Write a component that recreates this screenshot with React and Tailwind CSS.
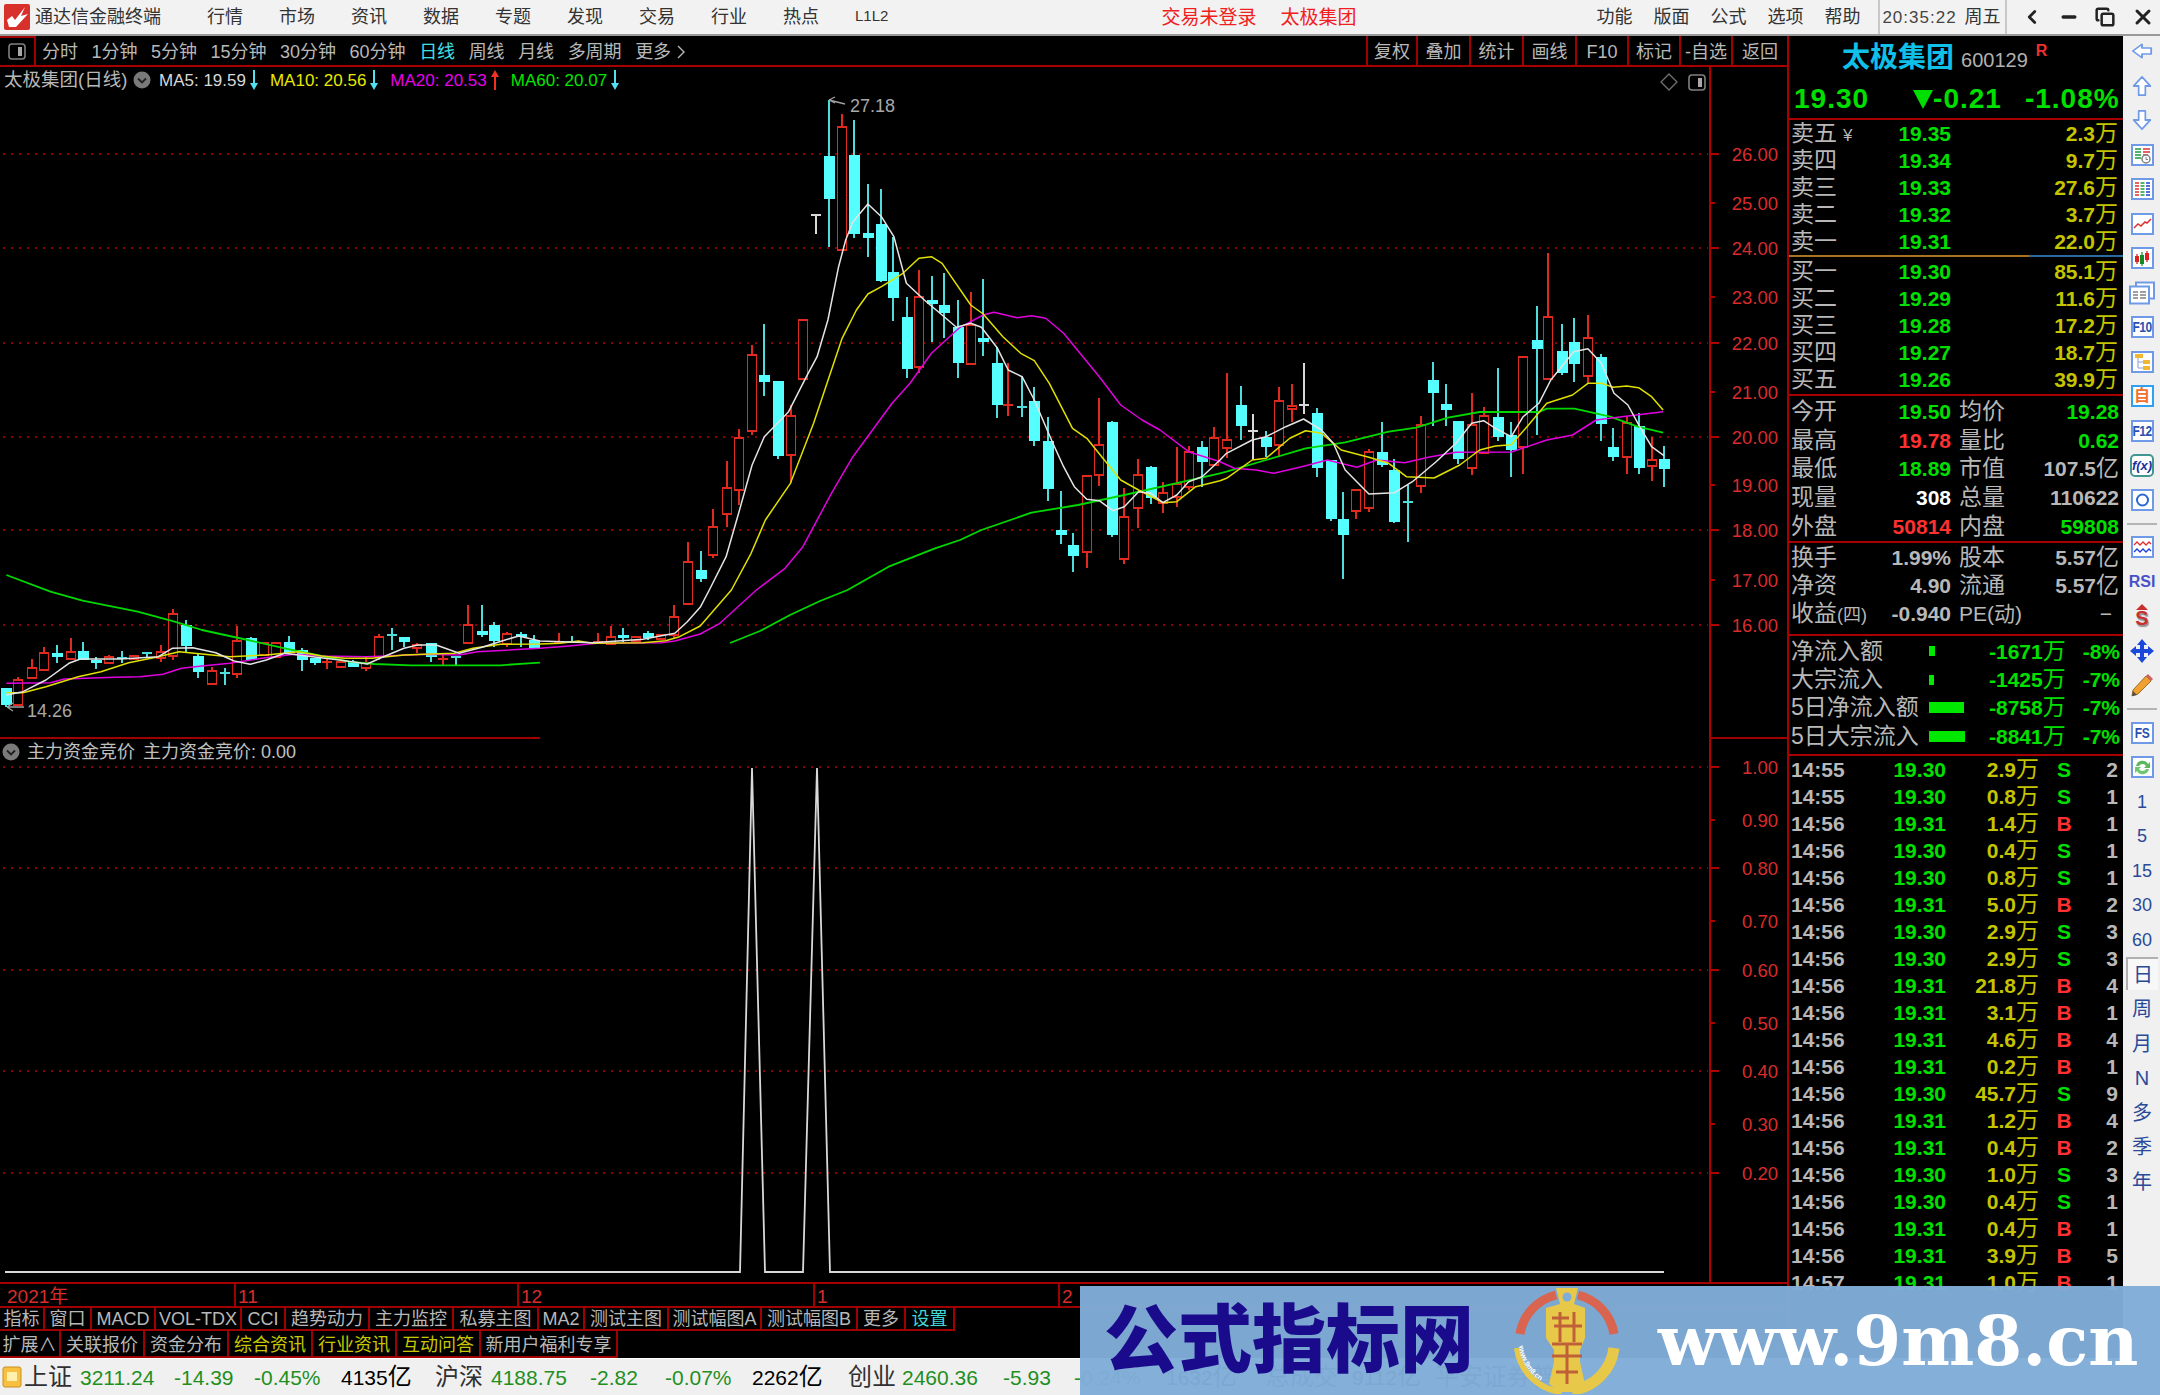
// App.jsx - 通达信 terminal screen
import { ChevronLeft, Minus, Copy, X } from "lucide-react";

// chart data below was read off crops of the chart, so every block keeps its own origin and x scale
const near = (o) => ([x, ...ys]) => [o.ox + x / o.sx, ...ys.map((y) => o.oy + y / 3)];
const A = near({ ox: 0, sx: 2.178, oy: 560 });
const B = near({ ox: 660, sx: 2.8, oy: 90 });
const C = near({ ox: 1100, sx: 2.529, oy: 240 });

// [x, high, top, bottom, low, kind]
const mk = (f, rows) => rows.map((r) => [...f(r.slice(0, 5)), r[5]]);
const candles = [
  ...mk(A, [
    [14, 385, 385, 435, 440, "c"], [40, 350, 360, 435, 435, "r"], [70, 297, 325, 353, 353, "r"], [96, 260, 280, 330, 330, "r"],
    [125, 255, 278, 291, 310, "c"], [154, 233, 275, 297, 297, "r"], [181, 245, 273, 300, 300, "c"], [210, 290, 300, 310, 328, "c"],
    [237, 285, 292, 308, 308, "r"], [265, 273, 293, 300, 310, "c"], [292, 285, 288, 298, 298, "r"], [320, 279, 279, 287, 290, "c"],
    [350, 255, 275, 295, 305, "r"], [377, 148, 162, 287, 300, "r"], [405, 180, 195, 258, 275, "c"], [432, 280, 288, 337, 355, "c"],
    [461, 322, 333, 372, 372, "r"], [489, 325, 338, 340, 376, "c"], [517, 197, 243, 343, 355, "r"], [547, 232, 235, 300, 300, "c"],
    [575, 250, 250, 285, 285, "r"], [602, 245, 248, 290, 295, "r"], [629, 228, 247, 278, 280, "c"], [657, 265, 270, 300, 332, "c"],
    [685, 295, 295, 310, 315, "c"], [712, 295, 307, 313, 328, "r"], [742, 300, 305, 322, 322, "r"], [769, 300, 305, 322, 322, "c"],
    [798, 290, 310, 323, 332, "r"], [825, 222, 230, 290, 300, "r"], [854, 205, 224, 227, 270, "c"], [880, 230, 230, 247, 260, "c"],
    [908, 250, 255, 265, 278, "r"], [938, 248, 248, 292, 305, "c"], [964, 280, 297, 299, 315, "r"], [993, 290, 292, 294, 315, "c"],
    [1020, 135, 195, 249, 249, "r"], [1050, 135, 212, 224, 232, "c"], [1076, 185, 195, 243, 260, "c"], [1105, 215, 222, 253, 262, "r"],
    [1134, 215, 222, 232, 260, "c"], [1162, 225, 240, 265, 265, "c"], [1217, 220, 245, 248, 250, "r"], [1246, 228, 246, 248, 250, "c"],
    [1302, 220, 247, 249, 250, "r"], [1330, 198, 230, 252, 252, "r"], [1357, 203, 224, 233, 245, "c"], [1386, 228, 230, 243, 248, "r"],
    [1412, 212, 220, 233, 240, "c"], [1440, 225, 225, 236, 240, "r"], [1468, 135, 172, 225, 235, "r"],
  ]),
  ...mk(B, [
    [77, 1355, 1415, 1542, 1542, "r"], [115, 1382, 1441, 1468, 1476, "c"], [148, 1258, 1312, 1394, 1404, "r"], [187, 1112, 1194, 1272, 1310, "r"],
    [220, 1018, 1045, 1200, 1246, "r"], [258, 766, 794, 1024, 1036, "r"], [292, 702, 855, 875, 918, "c"], [330, 873, 873, 1098, 1108, "c"],
    [368, 946, 978, 1096, 1180, "r"], [400, 690, 690, 866, 866, "r"], [437, 375, 376, 378, 432, "w"], [472, 30, 198, 328, 472, "c"],
    [510, 72, 110, 480, 480, "r"], [544, 90, 194, 432, 445, "c"], [582, 283, 428, 445, 500, "c"], [620, 297, 402, 572, 577, "c"],
    [653, 440, 545, 625, 693, "c"], [691, 622, 680, 836, 863, "c"], [724, 540, 622, 830, 850, "r"], [762, 558, 631, 643, 757, "c"],
    [796, 549, 644, 670, 743, "c"], [834, 631, 712, 818, 863, "c"], [872, 607, 705, 823, 823, "r"], [905, 568, 743, 755, 797, "c"],
    [943, 770, 820, 945, 985, "c"], [975, 820, 946, 949, 977, "r"], [1014, 858, 950, 958, 981, "c"], [1048, 892, 932, 1052, 1068, "c"],
    [1086, 982, 1054, 1197, 1233, "c"], [1124, 1202, 1320, 1336, 1363, "c"], [1157, 1328, 1365, 1398, 1445, "c"], [1195, 1158, 1158, 1385, 1435, "r"],
    [1228, 923, 1064, 1155, 1188, "r"], [1266, 992, 996, 1336, 1340, "c"], [1299, 1193, 1280, 1407, 1422, "r"], [1337, 1108, 1155, 1253, 1313, "r"],
    [1375, 1127, 1130, 1225, 1242, "c"], [1408, 1175, 1208, 1240, 1268, "r"], [1447, 1072, 1182, 1222, 1250, "r"], [1480, 1068, 1086, 1190, 1200, "r"],
    [1518, 1053, 1072, 1115, 1190, "c"], [1552, 1010, 1045, 1125, 1125, "r"],
  ]),
  ...mk(C, [
    [322, 400, 601, 625, 655, "r"], [356, 437, 496, 557, 600, "c"], [386, 522, 574, 576, 660, "w"], [421, 573, 590, 621, 650, "c"],
    [452, 441, 484, 615, 650, "r"], [486, 432, 497, 507, 545, "r"], [516, 370, 496, 498, 522, "w"], [550, 505, 518, 684, 710, "c"],
    [584, 660, 660, 837, 842, "c"], [614, 757, 838, 886, 1017, "c"], [648, 750, 750, 812, 836, "r"], [680, 628, 637, 805, 815, "r"],
    [714, 545, 636, 676, 680, "c"], [744, 658, 689, 847, 850, "c"], [778, 735, 785, 787, 905, "c"], [812, 527, 555, 737, 760, "r"],
    [842, 365, 419, 459, 558, "c"], [876, 433, 491, 509, 558, "c"], [906, 542, 544, 657, 672, "c"], [940, 460, 555, 683, 706, "r"],
    [972, 500, 528, 638, 642, "r"], [1006, 383, 532, 590, 603, "c"], [1040, 545, 586, 630, 710, "c"], [1070, 352, 352, 622, 702, "r"],
    [1104, 198, 301, 328, 585, "c"], [1134, 40, 231, 417, 417, "r"], [1168, 252, 334, 400, 405, "c"], [1198, 235, 307, 373, 427, "c"],
    [1234, 225, 294, 408, 428, "r"], [1268, 343, 352, 553, 603, "c"], [1298, 563, 622, 652, 662, "c"], [1332, 530, 550, 652, 702, "r"],
    [1362, 518, 558, 684, 702, "c"], [1396, 590, 659, 678, 724, "r"], [1426, 618, 658, 688, 742, "c"],
  ]),
];

const pts = (f, rows) => rows.map(f);
const path = (...parts) => parts.flat().map((p) => p[0].toFixed(1) + "," + p[1].toFixed(1)).join(" ");

const ma5 = path(
  pts(A, [[14,405],[50,395],[100,360],[150,310],[175,297],[260,297],[290,295],[345,290],[375,265],[420,263],[470,278],[510,303],[545,313],[580,300],[620,280],[680,290],[740,300],[800,312],[830,293],[880,265],[910,255],[950,255],[1000,280],[1050,262],[1100,240],[1130,228],[1176,243],[1290,248],[1400,238],[1470,220],[1497,185],[1526,140]]),
  pts(B, [[138,1500],[185,1400],[220,1270],[258,1125],[292,1040],[360,965],[410,860],[440,800],[470,690],[500,530],[520,450],[540,395],[582,342],[620,380],[655,440],[690,580],[740,630],[790,675],[830,712],[870,700],[900,712],[945,775],[975,840],[1014,860],[1048,930],[1100,1060],[1130,1130],[1160,1190],[1195,1228],[1230,1232],[1268,1262],[1300,1250],[1340,1205],[1375,1210],[1408,1238],[1447,1215],[1480,1175],[1518,1160],[1568,1110]]),
  pts(C, [[320,640],[385,600],[420,590],[470,560],[515,537],[560,570],[590,610],[620,690],[680,762],[745,758],[790,725],[850,665],[900,610],[940,550],[970,542],[1000,565],[1040,590],[1070,530],[1110,490],[1140,420],[1198,335],[1234,326],[1268,370],[1300,460],[1335,495],[1365,560],[1395,620],[1426,647]])
);
const ma10 = path(
  pts(A, [[14,398],[50,398],[100,380],[170,350],[220,335],[280,308],[340,292],[390,275],[440,282],[500,290],[580,285],[650,275],[700,288],[750,295],[810,295],[880,285],[940,282],[990,280],[1030,265],[1090,253],[1176,252],[1220,250],[1260,243],[1290,250],[1400,248],[1450,242],[1480,230],[1525,198],[1568,130]]),
  pts(B, [[200,1500],[255,1390],[295,1290],[365,1180],[430,1000],[510,745],[550,660],[582,612],[620,590],[680,550],[725,505],[760,500],[790,520],[870,645],[905,672],[960,740],[1010,790],[1048,812],[1090,880],[1155,1015],[1195,1045],[1240,1105],[1290,1170],[1340,1200],[1408,1238],[1447,1235],[1500,1190],[1568,1172]]),
  pts(C, [[320,715],[385,660],[420,655],[480,595],[520,572],[560,580],[610,630],[680,652],[730,670],[775,710],[845,714],[910,675],[960,630],[1000,618],[1040,614],[1080,560],[1130,490],[1195,465],[1234,430],[1268,430],[1298,442],[1332,438],[1362,443],[1395,470],[1424,510]])
);
const ma20 = path(
  pts(A, [[14,370],[110,368],[140,357],[250,352],[305,350],[355,343],[395,325],[440,318],[500,310],[570,295],[640,283],[700,288],[800,290],[930,283],[1000,285],[1040,275],[1176,265],[1240,258],[1300,250],[1440,248],[1470,243],[1525,222],[1568,190]]),
  pts(B, [[270,1500],[350,1435],[400,1370],[480,1210],[540,1100],[650,940],[700,880],[760,790],[840,712],[905,675],[935,667],[1000,683],[1040,677],[1080,685],[1130,730],[1230,860],[1290,945],[1350,990],[1400,1020],[1480,1085],[1568,1115]]),
  pts(C, [[340,685],[395,690],[440,700],[510,680],[575,660],[650,682],[700,660],[770,668],[830,652],[900,637],[1040,636],[1130,600],[1195,585],[1255,540],[1320,530],[1424,515]])
);
const ma60a = path(pts(A, [[14,45],[110,95],[180,122],[300,155],[380,185],[440,210],[540,240],[620,265],[700,288],[760,305],[815,312],[895,316],[1090,316],[1150,310],[1176,308]]));
const ma60b = path(
  [[730,643],[760,631],[790,615],[820,601]],
  pts(B, [[525,1500],[640,1430],[770,1375],[840,1350],[900,1320],[1040,1268],[1170,1245],[1300,1215],[1568,1150]]),
  pts(C, [[320,695],[420,660],[520,625],[620,607],[730,575],[800,563],[880,533],[960,516],[1110,516],[1130,506],[1200,506],[1290,530],[1360,560],[1424,578]])
);

const upperAxis = [[26,154],[25,203],[24,248],[23,297],[22,343],[21,392],[20,437],[19,485],[18,530],[17,580],[16,625]];
const lowerAxis = [["1.00",767],["0.90",820],["0.80",868],["0.70",921],["0.60",970],["0.50",1023],["0.40",1071],["0.30",1124],["0.20",1173]];

function ChartSvg() {
  return (
    <svg width="1787" height="1215" viewBox="0 67 1787 1215" className="block">
      {[154, 248, 343, 437, 530, 625, 767, 868, 970, 1071, 1173].map((y) => (
        <line key={y} x1="3" x2="1708" y1={y} y2={y} stroke="#8c0000" strokeWidth="2" strokeDasharray="2 6" />
      ))}

      {/* axis */}
      <line x1="1710" x2="1710" y1="67" y2="1282" stroke="#b00000" strokeWidth="2" />
      <line x1="0" x2="540" y1="738" y2="738" stroke="#a00000" strokeWidth="2" />
      <line x1="1710" x2="1787" y1="738" y2="738" stroke="#a00000" strokeWidth="2" />
      {upperAxis.map(([v, y]) => (
        <g key={v}>
          <line x1="1710" x2={v % 2 === 0 ? 1719 : 1715} y1={y} y2={y} stroke="#b00000" strokeWidth="2" />
          <text x="1778" y={y + 7} textAnchor="end" fontSize="18.5" fill="#d82c2c">{v}.00</text>
        </g>
      ))}
      {lowerAxis.map(([v, y], i) => (
        <g key={v}>
          <line x1="1710" x2={i % 2 === 0 ? 1719 : 1715} y1={y} y2={y} stroke="#b00000" strokeWidth="2" />
          <text x="1778" y={y + 7} textAnchor="end" fontSize="18.5" fill="#d82c2c">{v}</text>
        </g>
      ))}

      {/* candles */}
      {candles.map(([x, hi, top, bot, lo, k], i) => {
        const cx = Math.round(x);
        const color = k === "r" ? "#e0291f" : k === "c" ? "#4fdcdc" : "#d8d8d8";
        const doji = bot - top < 3;
        return (
          <g key={i} shapeRendering="crispEdges">
            <line x1={cx} x2={cx} y1={hi} y2={lo} stroke={color} strokeWidth="1.6" />
            {doji ? (
              <line x1={cx - 5} x2={cx + 5} y1={top} y2={top} stroke={color} strokeWidth="2" />
            ) : k === "r" ? (
              <rect x={cx - 4.5} y={top} width="9" height={bot - top} fill="#000" stroke="#e0291f" strokeWidth="1.8" />
            ) : (
              <rect x={cx - 5} y={top} width="10.5" height={bot - top} fill="#55ffff" />
            )}
          </g>
        );
      })}

      <polyline points={ma60a} fill="none" stroke="#00d800" strokeWidth="1.8" strokeLinejoin="round" />
      <polyline points={ma60b} fill="none" stroke="#00d800" strokeWidth="1.8" strokeLinejoin="round" />
      <polyline points={ma20} fill="none" stroke="#e000e0" strokeWidth="1.5" strokeLinejoin="round" />
      <polyline points={ma10} fill="none" stroke="#e0e000" strokeWidth="1.5" strokeLinejoin="round" />
      <polyline points={ma5} fill="none" stroke="#e4e4e4" strokeWidth="1.5" strokeLinejoin="round" />

      {/* high / low marks */}
      <path d="M829 100 L845 104 M829 100 L835 97 M829 100 L835 103" stroke="#a0a0a0" strokeWidth="1.3" fill="none" />
      <text x="850" y="112" fontSize="18" fill="#a8a8a8">27.18</text>
      <path d="M7 707 L24 707 M7 707 L13 703 M7 707 L13 711" stroke="#a0a0a0" strokeWidth="1.3" fill="none" />
      <text x="27" y="717" fontSize="18" fill="#a8a8a8">14.26</text>

      {/* lower indicator */}
      <polyline
        points="5,1272 740,1272 752,768 765,1272 803,1272 817,768 830,1272 1664,1272"
        fill="none"
        stroke="#d8d8d8"
        strokeWidth="1.8"
      />
    </svg>
  );
}

const ChevronDot = () => (
  <svg width="18" height="18" viewBox="0 0 18 18" className="shrink-0">
    <circle cx="9" cy="9" r="8.5" fill="#7a7a7a" />
    <path d="M5 7.5 L9 11.5 L13 7.5" fill="none" stroke="#202020" strokeWidth="1.8" />
  </svg>
);

const Drop = ({ up, color }) => (
  <svg width="10" height="22" viewBox="0 0 10 22" className="shrink-0 ml-[3px]">
    {up ? (
      <path d="M5 1 L9 8 H6 V21 H4 V8 H1 Z" fill={color} />
    ) : (
      <path d="M5 21 L9 14 H6 V1 H4 V14 H1 Z" fill={color} />
    )}
  </svg>
);

const PanelToggle = ({ className }) => (
  <svg width="18" height="17" viewBox="0 0 18 17" className={className}>
    <rect x="1" y="1" width="16" height="15" rx="3" fill="none" stroke="#808080" strokeWidth="1.6" />
    <rect x="10" y="4" width="4" height="9" fill="#a8a8a8" />
  </svg>
);

const periods = ["分时", "1分钟", "5分钟", "15分钟", "30分钟", "60分钟", "日线", "周线", "月线", "多周期"];
const toolRight = [
  { t: "复权", w: "w-[50px]" }, { t: "叠加", w: "w-[53px]" }, { t: "统计", w: "w-[53px]" }, { t: "画线", w: "w-[53px]" },
  { t: "F10", w: "w-[52px]" }, { t: "标记", w: "w-[52px]" }, { t: "-自选", w: "w-[52px]" }, { t: "返回", w: "w-[56px]" },
];
const tabsA = [
  { t: "指标", w: "w-[45px]" }, { t: "窗口", w: "w-[47px]" }, { t: "MACD", w: "w-[64px]" }, { t: "VOL-TDX", w: "w-[86px]" },
  { t: "CCI", w: "w-[44px]" }, { t: "趋势动力", w: "w-[84px]" }, { t: "主力监控", w: "w-[84px]" }, { t: "私募主图", w: "w-[85px]" },
  { t: "MA2", w: "w-[46px]" }, { t: "测试主图", w: "w-[84px]" }, { t: "测试幅图A", w: "w-[93px]" }, { t: "测试幅图B", w: "w-[96px]" },
  { t: "更多", w: "w-[48px]" }, { t: "设置", w: "w-[49px]", c: "text-[#40d8d8]" },
];
const tabsB = [
  { t: "扩展∧", w: "w-[61px]" }, { t: "关联报价", w: "w-[84px]" }, { t: "资金分布", w: "w-[84px]" },
  { t: "综合资讯", w: "w-[84px]", c: "text-[#c8c800]" }, { t: "行业资讯", w: "w-[84px]", c: "text-[#c8c800]" },
  { t: "互动问答", w: "w-[84px]", c: "text-[#c8c800]" }, { t: "新用户福利专享", w: "w-[137px]" },
];

function LeftColumn() {
  return (
    <div className="w-[1787px] shrink-0 flex flex-col">
      {/* period bar */}
      <div className="h-[31px] flex items-stretch border-b-2 border-[#a80000] text-[18px] text-[#b8b8b8] shrink-0">
        <div className="w-[36px] flex items-center justify-center border-t-2 border-r-2 border-[#a00000]">
          <PanelToggle />
        </div>
        <div className="flex items-center pl-[6px] pt-[3px] gap-[13.5px]">
          {periods.map((p) => (
            <span key={p} className={p === "日线" ? "text-[#40e0e8]" : ""}>{p}</span>
          ))}
          <span className="flex items-center gap-[5px]">
            更多
            <svg width="10" height="16" viewBox="0 0 10 16"><path d="M2 2 L8 8 L2 14" fill="none" stroke="#b8b8b8" strokeWidth="1.4" /></svg>
          </span>
        </div>
        <div className="ml-auto flex">
          {toolRight.map((it) => (
            <div key={it.t} className={`${it.w} pt-[3px] flex items-center justify-center border-l-2 border-[#a00000]`}>{it.t}</div>
          ))}
        </div>
      </div>

      {/* chart */}
      <div className="relative h-[1215px] shrink-0">
        <ChartSvg />
        <div className="absolute left-[4px] top-[1px] h-[24px] flex items-center text-[17px] leading-none">
          <span className="w-[129px] text-[#b8b8b8] text-[18.5px]">太极集团(日线)</span>
          <ChevronDot />
          <span className="ml-[8px] text-[#d8d8d8]">MA5: 19.59</span>
          <Drop color="#50e0f0" />
          <span className="ml-[11px] text-[#e8e800]">MA10: 20.56</span>
          <Drop color="#50e0f0" />
          <span className="ml-[11px] text-[#e800e8]">MA20: 20.53</span>
          <Drop up color="#f03020" />
          <span className="ml-[11px] text-[#00e800]">MA60: 20.07</span>
          <Drop color="#50e0f0" />
        </div>
        <svg width="18" height="18" viewBox="0 0 18 18" className="absolute left-[1660px] top-[6px]">
          <path d="M9 1 L17 9 L9 17 L1 9 Z" fill="none" stroke="#707070" strokeWidth="1.3" />
        </svg>
        <PanelToggle className="absolute left-[1688px] top-[7px]" />
        <div className="absolute left-[2px] top-[675px] flex items-center h-[20px] text-[18px] leading-none text-[#c0c0c0]">
          <ChevronDot />
          <span className="ml-[7px]">主力资金竞价</span>
          <span className="ml-[8px]">主力资金竞价: 0.00</span>
        </div>
      </div>

      {/* date row */}
      <div className="relative h-[24px] shrink-0 border-t-2 border-[#a80000] text-[19px] leading-[25px] text-[#d82c2c] flex">
        <span className="w-[236px] pl-[7px] border-r-2 border-[#a00000]">2021年</span>
        <span className="w-[283px] pl-[2px] border-r-2 border-[#a00000]">11</span>
        <span className="w-[296px] pl-[2px] border-r-2 border-[#a00000]">12</span>
        <span className="w-[245px] pl-[2px] border-r-2 border-[#a00000]">1</span>
        <span className="pl-[2px]">2</span>
      </div>

      {/* bottom tabs */}
      <div className="h-[25px] shrink-0 flex border-t-2 border-[#a00000] text-[18px] text-[#b8b8b8]">
        {tabsA.map((it) => (
          <div key={it.t} className={`${it.w} pt-[1px] flex items-center justify-center border-r-2 border-b-2 border-[#a00000] whitespace-nowrap ${it.c || ""}`}>{it.t}</div>
        ))}
      </div>
      <div className="h-[27px] shrink-0 flex text-[18px] text-[#b8b8b8]">
        {tabsB.map((it) => (
          <div key={it.t} className={`${it.w} pt-[3px] flex items-center justify-center border-r-2 border-b-2 border-[#a00000] whitespace-nowrap ${it.c || ""}`}>{it.t}</div>
        ))}
      </div>
    </div>
  );
}

const green = "text-[#00e000]";
const red = "text-[#ff3030]";
const gray = "text-[#b8b8b8]";

const Wan = ({ v, unit = "万", color = "text-[#c4c400]" }) => (
  <span className={color}>
    <b>{v}</b>
    <span className="text-[23px] font-normal">{unit}</span>
  </span>
);

const sells = [["卖五", "19.35", "2.3"], ["卖四", "19.34", "9.7"], ["卖三", "19.33", "27.6"], ["卖二", "19.32", "3.7"], ["卖一", "19.31", "22.0"]];
const buys = [["买一", "19.30", "85.1"], ["买二", "19.29", "11.6"], ["买三", "19.28", "17.2"], ["买四", "19.27", "18.7"], ["买五", "19.26", "39.9"]];
const stats = [
  ["今开", "19.50", green, "均价", "19.28", green],
  ["最高", "19.78", red, "量比", "0.62", green],
  ["最低", "18.89", green, "市值", "107.5", gray, "亿"],
  ["现量", "308", "text-white", "总量", "110622", gray],
  ["外盘", "50814", red, "内盘", "59808", green],
];
const flows = [
  { l: "净流入额", bar: "w-[6px] h-[10px]", v: "-1671", p: "-8%" },
  { l: "大宗流入", bar: "w-[5px] h-[10px]", v: "-1425", p: "-7%" },
  { l: "5日净流入额", bar: "w-[35px] h-[11px]", v: "-8758", p: "-7%" },
  { l: "5日大宗流入", bar: "w-[36px] h-[11px]", v: "-8841", p: "-7%" },
];
const ticks = [
  ["14:55","19.30","2.9","S","2"],["14:55","19.30","0.8","S","1"],["14:56","19.31","1.4","B","1"],["14:56","19.30","0.4","S","1"],
  ["14:56","19.30","0.8","S","1"],["14:56","19.31","5.0","B","2"],["14:56","19.30","2.9","S","3"],["14:56","19.30","2.9","S","3"],
  ["14:56","19.31","21.8","B","4"],["14:56","19.31","3.1","B","1"],["14:56","19.31","4.6","B","4"],["14:56","19.31","0.2","B","1"],
  ["14:56","19.30","45.7","S","9"],["14:56","19.31","1.2","B","4"],["14:56","19.31","0.4","B","2"],["14:56","19.30","1.0","S","3"],
  ["14:56","19.30","0.4","S","1"],["14:56","19.31","0.4","B","1"],["14:56","19.31","3.9","B","5"],["14:57","19.31","1.0","B","1"],
];

function QuoteRow({ label, price, amount, extra }) {
  return (
    <div className="h-[27px] flex items-center leading-none">
      <span className={`w-[102px] pl-[2px] text-[23px] ${gray}`}>
        {label}
        {extra && <span className="ml-[6px] text-[17px]">{extra}</span>}
      </span>
      <b className={`w-[60px] text-right ${green}`}>{price}</b>
      <span className="w-[167px] text-right"><Wan v={amount} /></span>
    </div>
  );
}

function RightPanel() {
  return (
    <div className="w-[336px] shrink-0 border-l-2 border-[#a80000] flex flex-col text-[21px] overflow-hidden">
      <div className="h-[84px] shrink-0 border-b-2 border-[#a80000] flex flex-col">
        <div className="h-[43px] flex items-center pl-[53px] leading-none">
          <span className="text-[28px] font-bold text-[#10c0e8]">太极集团</span>
          <span className="ml-[7px] mt-[4px] text-[20px] text-[#b0b0b0]">600129</span>
          <span className="ml-[8px] -mt-[14px] text-[16px] font-bold text-[#f03030]">R</span>
        </div>
        <div className={`flex-1 flex items-center pl-[5px] leading-none font-bold text-[28px] tracking-[1px] ${green}`}>
          <span>19.30</span>
          <span className="ml-[44px] flex items-center">
            <svg width="20" height="20" viewBox="0 0 20 20"><path d="M0 1 H20 L10 20 Z" fill="#00e000" /></svg>
            <span>-0.21</span>
          </span>
          <span className="ml-[23px]">-1.08%</span>
        </div>
      </div>

      <div className="shrink-0">
        {sells.map((r, i) => (
          <QuoteRow key={r[0]} label={r[0]} price={r[1]} amount={r[2]} extra={i === 0 ? "¥" : null} />
        ))}
      </div>
      <div className="h-[2px] shrink-0 flex">
        <div className="w-[240px] bg-[#a87420]" />
        <div className="flex-1 bg-[#2a6aa0]" />
      </div>
      <div className="shrink-0 pt-[1px]">
        {buys.map((r) => (
          <QuoteRow key={r[0]} label={r[0]} price={r[1]} amount={r[2]} />
        ))}
      </div>

      <div className="shrink-0 border-t-2 border-[#a80000] mt-[1px] pt-[1px]">
        {stats.map((r) => (
          <div key={r[0]} className="h-[28.8px] flex items-center leading-none">
            <span className={`w-[102px] pl-[2px] text-[23px] ${gray}`}>{r[0]}</span>
            <b className={`w-[60px] text-right ${r[2]}`}>{r[1]}</b>
            <span className={`w-[60px] pl-[8px] text-[23px] ${gray}`}>{r[3]}</span>
            <span className="w-[108px] text-right">
              <b className={r[5]}>{r[4]}</b>
              {r[6] && <span className={`text-[23px] ${gray}`}>{r[6]}</span>}
            </span>
          </div>
        ))}
      </div>

      <div className="shrink-0 h-[93px] border-t-2 border-[#a80000] pt-[1px]">
        {[["换手", "1.99%", "股本", "5.57"], ["净资", "4.90", "流通", "5.57"]].map((r) => (
          <div key={r[0]} className="h-[28px] flex items-center leading-none">
            <span className={`w-[102px] pl-[2px] text-[23px] ${gray}`}>{r[0]}</span>
            <b className={`w-[60px] text-right ${gray}`}>{r[1]}</b>
            <span className={`w-[60px] pl-[8px] text-[23px] ${gray}`}>{r[2]}</span>
            <span className="w-[108px] text-right">
              <b className={gray}>{r[3]}</b>
              <span className={`text-[23px] ${gray}`}>亿</span>
            </span>
          </div>
        ))}
        <div className={`h-[28px] flex items-center leading-none ${gray}`}>
          <span className="w-[102px] pl-[2px] text-[23px] whitespace-nowrap">收益<span className="text-[18px]">(四)</span></span>
          <b className="w-[60px] text-right whitespace-nowrap flex justify-end">-0.940</b>
          <span className="w-[100px] pl-[8px] text-[21px] whitespace-nowrap">PE(动)</span>
          <span className="w-[68px] text-right pr-[7px]">−</span>
        </div>
      </div>

      <div className="shrink-0 h-[120px] border-t-2 border-[#a80000] pt-[1px]">
        {flows.map((f) => (
          <div key={f.l} className="h-[28.4px] flex items-center leading-none">
            <span className={`w-[140px] pl-[2px] text-[23px] whitespace-nowrap ${gray}`}>{f.l}</span>
            <span className="w-[60px]"><span className={`block bg-[#00e800] ${f.bar}`} /></span>
            <span className="w-[68px] text-right whitespace-nowrap"><Wan v={f.v} color={green} /></span>
            <b className={`w-[63px] text-right ${green}`}>{f.p}</b>
          </div>
        ))}
      </div>

      <div className="flex-1 border-t-2 border-[#a80000]">
        {ticks.map((t, i) => (
          <div key={i} className="h-[27px] flex items-center leading-none">
            <b className={`w-[56px] pl-[2px] ${gray}`}>{t[0]}</b>
            <b className={`w-[101px] text-right ${green}`}>{t[1]}</b>
            <span className="w-[93px] text-right"><Wan v={t[2]} /></span>
            <b className={`w-[50px] text-center ${t[3] === "S" ? green : red}`}>{t[3]}</b>
            <b className={`w-[29px] text-right ${gray}`}>{t[4]}</b>
          </div>
        ))}
      </div>
    </div>
  );
}

const Box = ({ children, cn = "border-[#6f9ae8]" }) => (
  <div className={`w-[23px] h-[22px] border-2 ${cn} bg-white flex items-center justify-center overflow-hidden text-[16px] leading-none font-bold text-[#2a52b0]`}>
    {children}
  </div>
);
const FKey = ({ children }) => <span className="inline-block text-[12px] tracking-[-0.5px] scale-y-125">{children}</span>;
const Slot = ({ children }) => <div className="h-[34.5px] shrink-0 flex items-center justify-center">{children}</div>;
const Rule = () => (
  <div className="h-[13px] shrink-0 flex items-center px-[3px]">
    <div className="h-[2px] w-full bg-[#b4b4b4]" />
  </div>
);
const Arrow = ({ pts: p, w = 22, h = 22 }) => (
  <svg width={w} height={h} viewBox="0 0 24 24" preserveAspectRatio="none">
    <polygon points={p} fill="#fff" stroke="#6f9ae8" strokeWidth="2" strokeLinejoin="round" />
  </svg>
);

function Sidebar() {
  return (
    <div className="flex-1 bg-[#f0f0f0] flex flex-col items-stretch overflow-hidden pl-[1px]">
      <div className="-mt-[2px]" />
      <Slot><Arrow pts="2,12 12,3 12,8 22,8 22,16 12,16 12,21" h={18} /></Slot>
      <Slot><Arrow pts="12,2 22,12 16,12 16,22 8,22 8,12 2,12" w={20} /></Slot>
      <Slot><Arrow pts="12,22 22,12 16,12 16,2 8,2 8,12 2,12" w={20} /></Slot>
      <Slot>
        <Box>
          <svg width="19" height="18" viewBox="0 0 19 18">
            <path d="M2 3H8M2 6H8M2 9H8M2 12H8" stroke="#1a9a3a" strokeWidth="1.6" />
            <path d="M10 3H17M10 6H17M10 9H15" stroke="#e03030" strokeWidth="1.6" />
            <circle cx="13" cy="13" r="4" fill="#fff" stroke="#808080" strokeWidth="1.5" />
            <path d="M13 11V13.5H15" stroke="#808080" fill="none" />
          </svg>
        </Box>
      </Slot>
      <Slot>
        <Box>
          <svg width="19" height="18" viewBox="0 0 19 18">
            <g strokeWidth="1.5">
              <path d="M2 3H6M2 6H6M2 9H6M2 12H6M2 15H6" stroke="#e03030" />
              <path d="M7.5 3H11.5M7.5 6H11.5M7.5 9H11.5M7.5 12H11.5M7.5 15H11.5" stroke="#1a9a3a" />
              <path d="M13 3H17M13 6H17M13 9H17M13 12H17M13 15H17" stroke="#2040d0" />
            </g>
          </svg>
        </Box>
      </Slot>
      <Slot>
        <Box>
          <svg width="19" height="18" viewBox="0 0 19 18">
            <path d="M1 13 L5 9 L8 11 L12 7 L14 8 L18 4" fill="none" stroke="#e03030" strokeWidth="1.5" />
          </svg>
        </Box>
      </Slot>
      <Slot>
        <Box>
          <svg width="19" height="18" viewBox="0 0 19 18">
            <path d="M4 5V15M14 2V13" stroke="#d01818" strokeWidth="1.2" />
            <rect x="2" y="7" width="4" height="6" fill="#e02020" />
            <path d="M9 3V17" stroke="#128a28" strokeWidth="1.2" />
            <rect x="7" y="6" width="4" height="9" fill="#128a28" />
            <rect x="12" y="4" width="4" height="7" fill="#e02020" />
          </svg>
        </Box>
      </Slot>
      <Slot>
        <svg width="26" height="24" viewBox="0 0 26 24">
          <rect x="7" y="1.5" width="18" height="16" fill="#fff" stroke="#6f9ae8" strokeWidth="2" />
          <rect x="1" y="5.5" width="19" height="17" fill="#fff" stroke="#6f9ae8" strokeWidth="2" />
          <path d="M4 11H9M11 11H17M4 14H9M11 14H17M4 17H9M11 17H17" stroke="#808080" strokeWidth="1.6" />
        </svg>
      </Slot>
      <Slot><Box><FKey>F10</FKey></Box></Slot>
      <Slot>
        <Box>
          <svg width="19" height="18" viewBox="0 0 19 18">
            <rect x="2" y="1" width="8" height="4" fill="#f0b830" />
            <rect x="10" y="7" width="7" height="4" fill="#f0b830" />
            <rect x="10" y="13" width="7" height="4" fill="#f0b830" />
            <path d="M5 5V15H10M5 9H10" stroke="#8aa0d0" fill="none" />
          </svg>
        </Box>
      </Slot>
      <Slot><Box cn="border-[#30a0f0]"><span className="text-[#f07030]">自</span></Box></Slot>
      <Slot><Box><FKey>F12</FKey></Box></Slot>
      <Slot>
        <div className="w-[24px] h-[23px] rounded-[5px] border-2 border-[#409890] bg-white flex items-center justify-center text-[13px] italic font-bold text-[#2030a0] leading-none whitespace-nowrap">
          f(x)
        </div>
      </Slot>
      <Slot>
        <Box>
          <svg width="19" height="18" viewBox="0 0 19 18"><circle cx="9.5" cy="9" r="5.5" fill="none" stroke="#2a6ad0" strokeWidth="2" /></svg>
        </Box>
      </Slot>
      <Rule />
      <Slot>
        <Box>
          <svg width="19" height="18" viewBox="0 0 19 18">
            <path d="M1 7 L4 4 L7 7 L10 4 L13 7 L16 4 L18 6" fill="none" stroke="#e03030" strokeWidth="1.3" />
            <path d="M1 14 L4 11 L7 14 L10 11 L13 14 L16 11 L18 13" fill="none" stroke="#2040d0" strokeWidth="1.3" />
          </svg>
        </Box>
      </Slot>
      <Slot><span className="text-[16px] font-bold text-[#4a50c8] leading-none">RSI</span></Slot>
      <Slot>
        <span className="flex flex-col items-center leading-none text-[#c83030] font-bold">
          <svg width="12" height="6" viewBox="0 0 12 6"><path d="M6 0 L12 6 H0 Z" fill="#c83030" /></svg>
          <span className="text-[20px] -mt-[2px] [text-shadow:1px_2px_1px_#909090]">S</span>
        </span>
      </Slot>
      <Slot>
        <svg width="24" height="24" viewBox="0 0 24 24">
          <path d="M12 0 L17 6 H14 V10 H18 V7 L24 12 L18 17 V14 H14 V18 H17 L12 24 L7 18 H10 V14 H6 V17 L0 12 L6 7 V10 H10 V6 H7 Z" fill="#1a48d8" />
        </svg>
      </Slot>
      <Slot>
        <svg width="24" height="24" viewBox="0 0 24 24">
          <path d="M3 17 L16 3 L21 8 L8 21 L2 23 Z" fill="#f0a030" stroke="#a07020" strokeWidth="1" />
          <path d="M16 3 L18 1 L23 6 L21 8 Z" fill="#d06060" />
          <path d="M2 23 L3 18 L7 22 Z" fill="#505050" />
        </svg>
      </Slot>
      <Rule />
      <Slot><Box><FKey>FS</FKey></Box></Slot>
      <Slot>
        <Box>
          <svg width="19" height="18" viewBox="0 0 19 18">
            <path d="M3 8 A6.5 6.5 0 0 1 15 6 L17 4 L17 10 L11 10 L13 8 A4 4 0 0 0 6 8 Z" fill="#5cb85c" />
            <path d="M16 11 A6.5 6.5 0 0 1 4 13 L2 15 L2 9 L8 9 L6 11 A4 4 0 0 0 13 11 Z" fill="#6fc86f" />
          </svg>
        </Box>
      </Slot>
      {["1", "5", "15", "30", "60"].map((n) => (
        <Slot key={n}><span className="text-[18px] leading-none text-[#2a4a98]">{n}</span></Slot>
      ))}
      <div className="h-[33px] mx-[2px] shrink-0 flex items-center justify-center border-t-2 border-l-2 border-[#b0b0b0] bg-[#f8f8f8] text-[20px] leading-none text-[#2a4a98]">日</div>
      <div className="h-[2px] shrink-0" />
      {["周", "月", "N", "多", "季", "年"].map((n) => (
        <Slot key={n}><span className="text-[20px] leading-none text-[#2a4a98]">{n}</span></Slot>
      ))}
    </div>
  );
}

const menus = ["行情", "市场", "资讯", "数据", "专题", "发现", "交易", "行业", "热点", "L1L2"];
const menusRight = ["功能", "版面", "公式", "选项", "帮助"];

function TitleBar() {
  return (
    <div className="h-[36px] shrink-0 bg-[#f2f2f2] border-b-2 border-[#9a9a9a] flex items-center text-[18px] leading-none text-[#333] relative">
      <svg width="26" height="26" viewBox="0 0 26 26" className="ml-[4px] shrink-0">
        <rect width="26" height="26" rx="2" fill="#d8302a" />
        <path d="M21 3 L17 12 L24 10 L12 23 L5 23 L3 16 L8 12 L11 16 Z" fill="#fff" />
      </svg>
      <span className="ml-[5px]">通达信金融终端</span>
      <div className="ml-[46px] flex gap-[36px]">
        {menus.map((m) => <span key={m} className={m === "L1L2" ? "text-[15px]" : ""}>{m}</span>)}
      </div>
      <span className="ml-[273px] text-[19px] text-[#f02020] whitespace-nowrap">交易未登录</span>
      <span className="ml-[24px] text-[19px] text-[#f02020] whitespace-nowrap">太极集团</span>
      <div className="ml-[240px] flex gap-[21px]">
        {menusRight.map((m) => <span key={m}>{m}</span>)}
      </div>
      <div className="ml-[18px] h-full w-[2px] bg-[#c8c8c8]" />
      <span className="ml-[2px] text-[17px] tracking-[1px] text-[#444]">20:35:22</span>
      <span className="ml-[8px]">周五</span>
      <div className="ml-[4px] h-full w-[2px] bg-[#c8c8c8]" />
      <div className="ml-[14px] flex items-center gap-[16px] text-[#222]">
        <ChevronLeft size={22} strokeWidth={3} />
        <Minus size={20} strokeWidth={4} />
        <Copy size={20} strokeWidth={3} />
        <X size={24} strokeWidth={3} />
      </div>
    </div>
  );
}

const Num = ({ w, children, c = "text-[#1f8f1f]" }) => <span className={`${w} shrink-0 text-[21px] whitespace-nowrap ${c}`}>{children}</span>;
const Cn = ({ w, children }) => <span className={`${w} shrink-0 text-[24px] whitespace-nowrap text-[#303030]`}>{children}</span>;

function StatusBar() {
  return (
    <div className="h-[37px] shrink-0 bg-[#f0f0f0] border-t border-white flex items-center leading-none">
      <svg width="20" height="22" viewBox="0 0 20 22" className="ml-[2px] mr-[2px] shrink-0">
        <rect x="1" y="1" width="18" height="20" rx="2" fill="#f8c040" stroke="#c89020" />
        <rect x="5" y="6" width="10" height="9" fill="#fff0b0" />
      </svg>
      <Cn w="w-[56px]">上证</Cn>
      <Num w="w-[94px]">3211.24</Num>
      <Num w="w-[80px]">-14.39</Num>
      <Num w="w-[87px]">-0.45%</Num>
      <Num w="w-[94px]" c="text-black">4135<span className="text-[24px]">亿</span></Num>
      <Cn w="w-[56px]">沪深</Cn>
      <Num w="w-[99px]">4188.75</Num>
      <Num w="w-[75px]">-2.82</Num>
      <Num w="w-[87px]">-0.07%</Num>
      <Num w="w-[96px]" c="text-black">2262<span className="text-[24px]">亿</span></Num>
      <Cn w="w-[54px]">创业</Cn>
      <Num w="w-[101px]">2460.36</Num>
      <Num w="w-[71px]">-5.93</Num>
      <Num w="w-[92px]">-0.24%</Num>
      <Num w="w-[100px]" c="text-black">1632<span className="text-[24px]">亿</span></Num>
      <Cn w="w-[86px]">总成交</Cn>
      <Num w="w-[83px]" c="text-black">9112<span className="text-[24px]">亿</span></Num>
      <Cn w="w-[200px]">平安证券普通</Cn>
    </div>
  );
}

function BannerLogo() {
  return (
    <svg width="106" height="106" viewBox="0 0 106 106" className="shrink-0">
      <path d="M6 46 A48 48 0 0 1 42 7" fill="none" stroke="#d96450" strokeWidth="9" />
      <path d="M64 7 A48 48 0 0 1 100 46" fill="none" stroke="#d96450" strokeWidth="9" />
      <path d="M3 60 A50 50 0 0 0 48 104" fill="none" stroke="#e8c848" strokeWidth="6" />
      <path d="M58 102 A48 48 0 0 0 100 60" fill="none" stroke="#e8c848" strokeWidth="11" />
      <path d="M42 0 H64 L60 16 L71 20 V50 L66 62 V74 L71 96 L62 104 H46 L35 96 L40 74 V62 L32 50 V20 L46 16 Z" fill="#e8c848" />
      <circle cx="53" cy="9" r="4.5" fill="#80acd8" />
      <path d="M38 30 H55 M40 38 H68 M46 24 V54 M60 24 V54 M38 56 H68 M38 68 H68 M53 56 V96 M42 84 L64 84" stroke="#c06038" strokeWidth="3" fill="none" />
      <path id="bannerArc" d="M5 58 A48 48 0 0 0 46 100" fill="none" />
      <text fontSize="7" fill="#fff" fontWeight="700">
        <textPath href="#bannerArc">www.9m8.cn</textPath>
      </text>
    </svg>
  );
}

export default function App() {
  return (
    <div className="relative w-[2160px] h-[1395px] bg-black overflow-hidden flex flex-col font-['Liberation_Sans','Noto_Sans_CJK_SC',sans-serif]">
      <TitleBar />
      <div className="flex-1 flex min-h-0">
        <LeftColumn />
        <RightPanel />
        <Sidebar />
      </div>
      <StatusBar />

      {/* watermark strip */}
      <div className="absolute right-0 bottom-0 w-[1080px] h-[109px] bg-[#80acd8]/[0.97] flex items-center">
        <span className="ml-[24px] w-[410px] shrink-0 text-[74px] leading-none font-black text-[#1a0a8c] whitespace-nowrap">公式指标网</span>
        <BannerLogo />
        <span className="ml-[38px] text-[69px] leading-none font-bold text-white whitespace-nowrap font-['DejaVu_Serif',serif]">www.9m8.cn</span>
      </div>
    </div>
  );
}
